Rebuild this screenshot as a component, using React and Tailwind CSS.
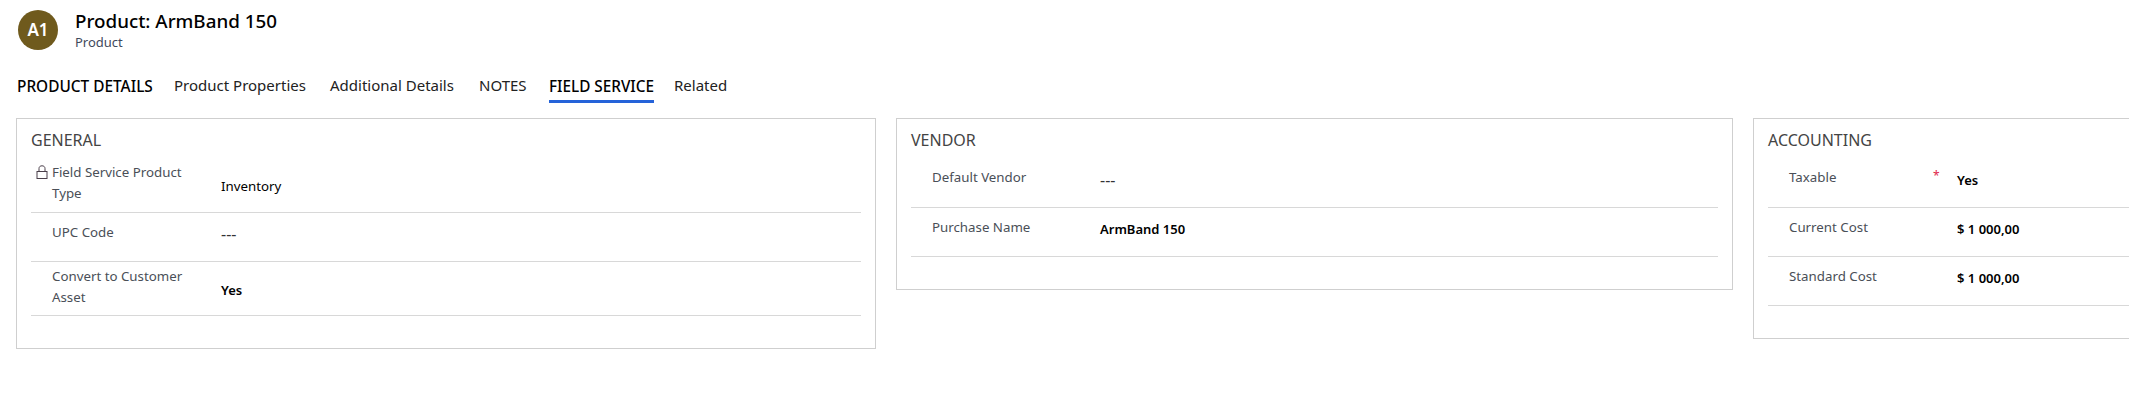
function Lock() {
  return (
    <svg width="12" height="14" viewBox="0 0 12 14" fill="none" stroke="#4a3f4a" strokeWidth="1" className="shrink-0">
      <rect x="1" y="6.5" width="10" height="7" />
      <path d="M3 6.5V3.6C3 1.8 4.2 0.8 6 0.8s3 1 3 2.8v2.9" />
    </svg>
  );
}
function Row({ h, label, value, bold, lock, req, labelW, labelPt, valuePt, dash }) {
  return (
    <div className={`relative flex border-b border-[#d8d8d8] ${h}`}>
      {lock && <span className="absolute left-[5px] top-[9px]"><Lock /></span>}
      {req && <span className="absolute left-[165px] top-[11px] text-[12px] leading-[18px] text-[#e0264a]">*</span>}
      <div className={`${labelPt} ${labelW} pl-[21px] shrink-0 text-[13.3px] leading-[21px] text-[#4a4f57]`}>
        {label}
      </div>
      <div className={`${valuePt} leading-[21px] ${dash ? "text-[16px] font-normal text-[#333]" : bold ? "text-[13px] font-semibold text-black" : "text-[13.3px] font-normal text-black"}`}>{value}</div>
    </div>
  );
}
function Card({ width, title, height, children }) {
  return (
    <section className={`${width} ${height} shrink-0 border border-[#cfcfcf] px-[14px] pt-[10px]`}>
      <h2 className="text-[16px] leading-[22px] text-[#444] mb-[5px]">{title}</h2>
      {children}
    </section>
  );
}
export default function App() {
  return (
    <div className="h-[411px] overflow-hidden bg-white font-['Noto_Sans',sans-serif]">
      <header className="flex pl-[18px] pt-[10px] h-[66px]">
        <div className="flex h-10 w-10 items-center justify-center rounded-full bg-[#6f5a1d] text-[17px] font-semibold text-white">A1</div>
        <div className="ml-[17px]">
          <div className="text-[18.8px] leading-[24px] -mt-[1px] font-medium text-black">Product: ArmBand 150</div>
          <div className="text-[13px] leading-[18px] text-[#3f4a5c]">Product</div>
        </div>
      </header>
      <nav className="flex pl-[17px] h-[37px] text-[15px] leading-[39px] text-[#222]">
        <a className="w-[157px] text-[15.4px] leading-[41px] font-medium text-black">PRODUCT DETAILS</a>
        <a className="w-[156px]">Product Properties</a>
        <a className="w-[149px]">Additional Details</a>
        <a className="w-[70px]">NOTES</a>
        <a className="relative w-[125px] text-[15.3px] leading-[41px] font-medium text-black">FIELD SERVICE<span className="absolute left-0 bottom-0 h-[3px] w-[105px] bg-[#2563d9]" /></a>
        <a>Related</a>
      </nav>
      <main className="flex pl-[16px] pt-[15px] items-start gap-[20px]">
        <Card width="w-[860px]" height="h-[231px]" title="GENERAL">
          <Row h="h-[57px]" labelW="w-[190px]" lock labelPt="pt-[6px]" valuePt="pt-[20px]" label={<>Field Service Product<br />Type</>} value="Inventory" />
          <Row h="h-[49px]" labelW="w-[190px]" labelPt="pt-[9px]" valuePt="pt-[11px]" label="UPC Code" value="---" dash />
          <Row h="h-[54px]" labelW="w-[190px]" labelPt="pt-[4px]" valuePt="pt-[18px]" label={<>Convert to Customer<br />Asset</>} value="Yes" bold />
        </Card>
        <Card width="w-[837px]" height="h-[172px]" title="VENDOR">
          <Row h="h-[52px]" labelW="w-[189px]" labelPt="pt-[11px]" valuePt="pt-[14px]" label="Default Vendor" value="---" dash />
          <Row h="h-[49px]" labelW="w-[189px]" labelPt="pt-[9px]" valuePt="pt-[11px]" label="Purchase Name" value="ArmBand 150" bold />
        </Card>
        <Card width="w-[420px]" height="h-[221px]" title="ACCOUNTING">
          <Row h="h-[52px]" req labelW="w-[189px]" labelPt="pt-[11px]" valuePt="pt-[14px]" label="Taxable" value="Yes" bold />
          <Row h="h-[49px]" labelW="w-[189px]" labelPt="pt-[9px]" valuePt="pt-[11px]" label="Current Cost" value="$ 1 000,00" bold />
          <Row h="h-[49px]" labelW="w-[189px]" labelPt="pt-[9px]" valuePt="pt-[11px]" label="Standard Cost" value="$ 1 000,00" bold />
        </Card>
      </main>
    </div>
  );
}
